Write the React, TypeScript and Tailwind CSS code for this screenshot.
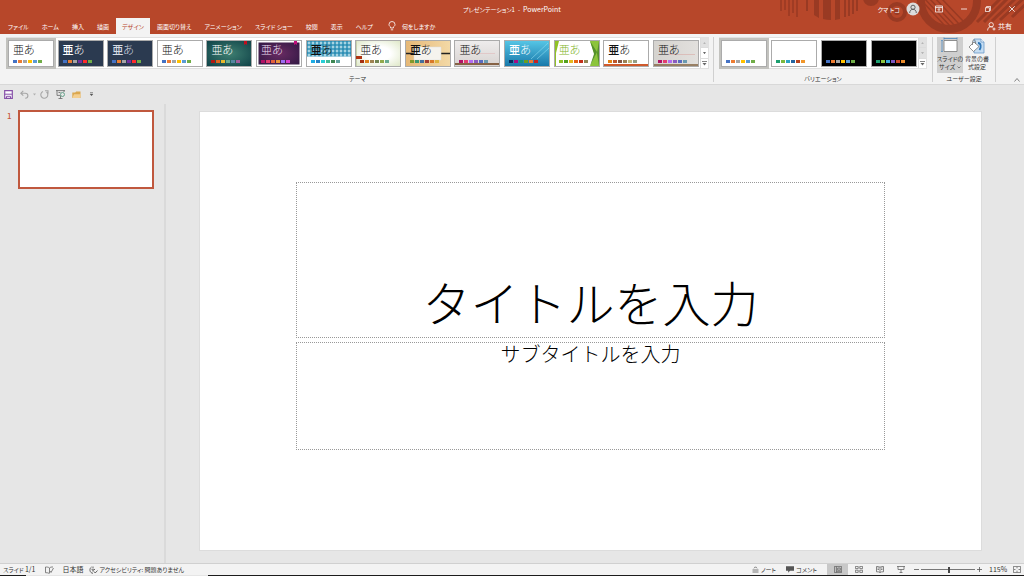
import { useState, type ReactNode } from "react";
import clsx from "clsx";

interface Theme {
  name: string;
  bg: string;
  ink?: string;
  bold?: boolean;
  colors: string[];
  art?: ReactNode;
}

const office = ["#4472c4", "#ed7d31", "#a5a5a5", "#ffc000", "#5b9bd5", "#70ad47"];
const night = ["#4472c4", "#ed7d31", "#a5a5a5", "#7030a0", "#ff2a2a", "#70ad47"];
const rose = ["#b31166", "#e33d6f", "#b36bf0", "#8a5bc0", "#5a6bc0", "#6a9ab0"];

const themes: Theme[] = [
  { name: "Office テーマ", bg: "bg-white", colors: office },
  { name: "ネイビー", bg: "bg-[#2b3a50]", ink: "text-white", bold: true, colors: night },
  { name: "スレート", bg: "bg-[#2b3a50]", ink: "text-[#d5dbe3]", bold: true, colors: night },
  { name: "ホワイト", bg: "bg-white", colors: office },
  {
    name: "イオン",
    bg: "bg-radial from-[#3f8072] to-[#0f4348]",
    ink: "text-white",
    colors: ["#b31912", "#e0661f", "#e8b82a", "#6aac90", "#5486a0", "#9e5e9b"],
    art: <path d="M37 0h3v4l-1.500-1-1.500 1z" fill="#c00d1e" />,
  },
  {
    name: "イオン ボードルーム",
    bg: "bg-radial from-[#6a2b63] to-[#2c1640]",
    ink: "text-[#e9dff0]",
    colors: ["#b31166", "#e33d6f", "#e45f3c", "#e9943a", "#9b6bf2", "#d53dd0"],
    art: (
      <>
        <path d="M.75.75h42.500v23.500H.75z" fill="none" stroke="#fff" strokeWidth="1.500" />
        <path d="M37 0h3v4l-1.500-1-1.500 1z" fill="#c00d7a" />
      </>
    ),
  },
  {
    name: "インテグラル",
    bg: "bg-white",
    bold: true,
    colors: ["#1cade4", "#2683c6", "#27ced7", "#42ba97", "#3e8853", "#62a39f"],
    art: (
      <>
        <defs>
          <pattern id="check" width="4" height="4" patternUnits="userSpaceOnUse">
            <path d="M0 0h4v4H0z" fill="#2e8fb5" />
            <path d="m2 .3 1.700 1.700L2 3.700.3 2z" fill="#a9d6e4" />
          </pattern>
        </defs>
        <path d="M0 0h44v15.500H0z" fill="url(#check)" />
      </>
    ),
  },
  {
    name: "ウィスプ",
    bg: "bg-radial from-white from-40% to-[#dfe8c8]",
    colors: ["#a53010", "#de7e18", "#9f8351", "#728653", "#92aa4c", "#6aac91"],
    art: (
      <>
        <path d="M.5 0v25" stroke="#c9d3ad" />
        <path d="M0 15h6v3H0z" fill="#b03513" />
      </>
    ),
  },
  {
    name: "オーガニック",
    bg: "bg-linear-to-r from-[#e6b877] to-[#f3d9a6]",
    bold: true,
    colors: ["#83992a", "#3c9770", "#44709d", "#a23c33", "#d97828", "#deb340"],
    art: (
      <>
        <path d="M0 12.500h44" stroke="#222" strokeWidth="1.500" />
        <path d="M8 6h27v13H8z" fill="#f5f3ee" stroke="#ddd" strokeWidth=".5" />
      </>
    ),
  },
  {
    name: "ギャラリー",
    bg: "bg-linear-to-b from-[#eeecec] to-[#d8d3d1]",
    colors: rose,
    art: (
      <>
        <path d="M14 12.500h26" stroke="#dfb9b9" strokeWidth=".6" />
        <path d="M0 23h44" stroke="#856245" strokeWidth="2" />
      </>
    ),
  },
  {
    name: "スライス",
    bg: "bg-linear-to-b from-[#55c5e5] to-[#1879aa]",
    ink: "text-white",
    bold: true,
    colors: ["#052f61", "#a50e82", "#14967c", "#6a9e1f", "#e87d37", "#c62324"],
    art: <path d="m26 18 17-16M32 18 44 7" stroke="#8fdcf0" strokeWidth=".6" />,
  },
  {
    name: "ファセット",
    bg: "bg-white",
    ink: "text-[#83b52a]",
    colors: ["#90c226", "#54a021", "#e6b91e", "#e76618", "#c42f1a", "#918655"],
    art: (
      <>
        <path d="M0 0h4L1 12v13H0z" fill="#90c226" />
        <path d="M35 0h9v25h-9l5-11z" fill="#8cc43c" />
        <path d="m35 0 7 11-7 14 4-12zM42 12l2-12v25z" fill="#55912b" />
      </>
    ),
  },
  {
    name: "レトロスペクト",
    bg: "bg-white",
    bold: true,
    colors: ["#e48312", "#bd582c", "#865640", "#9b8357", "#c2bc80", "#94a088"],
    art: <path d="M0 24h44" stroke="#cf5a2c" strokeWidth="2" />,
  },
  {
    name: "木版活字",
    bg: "bg-linear-to-r from-[#d5d3cf] to-[#e2e0dd]",
    colors: rose,
    art: (
      <>
        <path d="M14 13.500h27" stroke="#d8a9a4" strokeWidth=".6" />
        <path d="M0 24h44" stroke="#80613c" strokeWidth="1.500" />
      </>
    ),
  },
];

const variants: Theme[] = [
  { name: "バリエーション 1", bg: "bg-white", colors: office },
  {
    name: "バリエーション 2",
    bg: "bg-white",
    colors: ["#1b9e6f", "#7cb83e", "#2ba3c4", "#2465a0", "#b8431e", "#f0962a"],
  },
  { name: "バリエーション 3", bg: "bg-black", colors: office },
  {
    name: "バリエーション 4",
    bg: "bg-black",
    colors: ["#1b9e6f", "#8cc43e", "#3ba8d8", "#7a55c0", "#c8452a", "#e88a2a"],
  },
];

const tabs = [
  "ファイル",
  "ホーム",
  "挿入",
  "描画",
  "デザイン",
  "画面切り替え",
  "アニメーション",
  "スライド ショー",
  "校閲",
  "表示",
  "ヘルプ",
];

function Thumb({
  theme,
  selected,
  sample,
  onSelect,
}: {
  theme: Theme;
  selected: boolean;
  sample?: boolean;
  onSelect: () => void;
}) {
  return (
    <button
      type="button"
      aria-label={theme.name}
      aria-pressed={selected}
      onClick={onSelect}
      className={clsx(
        "relative h-[27px] w-[46px] shrink-0 overflow-hidden border border-[#ababab]",
        theme.bg,
        selected && "outline-2 outline-[#c2c2be]",
      )}
    >
      <svg viewBox="0 0 44 25" className="absolute inset-0 size-full">
        {theme.art}
      </svg>
      <span className="relative flex h-full flex-col justify-between px-1 pt-[3px] pb-[3px]">
        <span
          className={clsx(
            "flex h-3 items-center text-[11px] font-light",
            theme.ink ?? "text-[#111]",
          )}
        >
          {sample && (
            <>
              <span className={clsx(theme.bold && "font-medium")}>亜</span>
              <span>あ</span>
            </>
          )}
        </span>
        <span className="flex gap-px">
          {theme.colors.map((c) => (
            <span key={c} className="h-[3px] w-1" style={{ background: c }} />
          ))}
        </span>
      </span>
    </button>
  );
}

function Scroller({ label, atEnd }: { label: string; atEnd?: boolean }) {
  return (
    <div className="flex w-2 shrink-0 flex-col border-l border-[#dcdcdc]">
      <button
        type="button"
        disabled
        aria-label={`${label} 前へ`}
        className="flex flex-1 items-center justify-center bg-[#e1e1e1]"
      >
        <svg viewBox="0 0 4 3" className="w-[3px]">
          <path d="M0 3h4L2 0z" fill="#b5b5b5" />
        </svg>
      </button>
      <button
        type="button"
        disabled={atEnd}
        aria-label={`${label} 次へ`}
        className={clsx(
          "flex flex-1 items-center justify-center border-y border-[#dcdcdc]",
          atEnd && "bg-[#e1e1e1]",
        )}
      >
        <svg viewBox="0 0 4 3" className="w-[3px]">
          <path d="M0 0h4L2 3z" fill={atEnd ? "#b5b5b5" : "#666"} />
        </svg>
      </button>
      <button
        type="button"
        aria-label={`${label} 一覧`}
        className="flex flex-1 items-center justify-center"
      >
        <svg viewBox="0 0 5 5" className="w-[5px]">
          <path d="M0 .5h5" stroke="#666" strokeWidth=".8" />
          <path d="M.5 2h4l-2 2.500z" fill="#666" />
        </svg>
      </button>
    </div>
  );
}

function TitleArt() {
  return (
    <svg
      viewBox="0 0 244 34"
      className="pointer-events-none absolute top-0 right-0 h-[34px] w-[244px]"
      fill="none"
      stroke="#993a23"
    >
      <path d="M1 0v11M5 0v10M9 0v16M13 0v13M17 0v17" strokeWidth="1.500" />
      <path d="M27 0v11M65 0v17M69 0v16M73 0v14M77 0v11" strokeWidth="2" />
      <path d="M34 0h5v18l-5-3zM43 0h8v20q-4 0-8-1zM55 0h5v19l-5 1z" fill="#993a23" stroke="none" />
      <circle cx="91" cy="-2" r="8" fill="#993a23" stroke="none" />
      <circle cx="117" cy="12" r="8" strokeWidth="4" />
      <circle cx="117" cy="12" r="3" fill="#993a23" stroke="none" />
      <circle cx="169" cy="1" r="28" strokeWidth="8" />
      <path
        d="m143 2 22 24M144-2l27 29M149-2l26 28M155-2l24 26M161-2l22 23"
        strokeWidth="1.500"
      />
      <path d="m197 22 24-24M204 22l24-24M212 21l24-23M220 20l24-22M232 17l16-15" strokeWidth="3" />
    </svg>
  );
}

function TitleBar() {
  return (
    <div className="relative grid h-[18px] grid-cols-[1fr_auto_1fr] items-center text-[7px]">
      <h1 className="col-start-2">
        <span className="text-[6px]">プレゼンテーション1&ensp;-&ensp;</span>
        PowerPoint
      </h1>
      <div className="flex items-center justify-end pr-1">
        <span className="text-[6px]">クマ トコ</span>
        <button type="button" aria-label="アカウント" className="mr-[15px] ml-1.5">
          <svg viewBox="0 0 14 14" className="size-3.5">
            <circle cx="7" cy="7" r="6.500" fill="#dcdcdc" />
            <g fill="none" stroke="#555" strokeWidth=".9">
              <circle cx="7" cy="5.300" r="2.100" />
              <path d="M3.700 11c0-5 6.600-5 6.600 0" />
            </g>
          </svg>
        </button>
        <button type="button" aria-label="リボンの表示オプション" className="mr-[18px]">
          <svg viewBox="0 0 8 8" className="size-2" fill="none" stroke="#fff" strokeWidth=".8">
            <path d="M.4 1h7.200v6H.4zM.4 2.600h7.200M4 6.300V3.600M2.800 4.800 4 3.600l1.200 1.200" />
          </svg>
        </button>
        <button type="button" aria-label="最小化" className="mr-[18px]">
          <svg viewBox="0 0 6 6" className="size-1.5" stroke="#fff" strokeWidth=".8">
            <path d="M0 3h6" />
          </svg>
        </button>
        <button type="button" aria-label="元に戻す (縮小)" className="mr-[18px]">
          <svg viewBox="0 0 6 6" className="size-1.5" fill="none" stroke="#fff" strokeWidth=".8">
            <path d="M.4 1.700h4v3.900h-4zM1.600 1.700V.4h4v4H4.400" />
          </svg>
        </button>
        <button type="button" aria-label="閉じる" className="pr-[5px]">
          <svg viewBox="0 0 6 6" className="size-1.5" stroke="#fff" strokeWidth=".8">
            <path d="m.3.3 5.400 5.400M5.700.3.3 5.700" />
          </svg>
        </button>
      </div>
    </div>
  );
}

function Tabs() {
  const [active, setActive] = useState("デザイン");
  return (
    <nav className="relative flex h-4 items-stretch gap-px pl-0.5 text-[6px]">
      {tabs.map((t) => (
        <button
          key={t}
          type="button"
          onClick={() => setActive(t)}
          className={clsx("px-1.5", t === active && "bg-[#f3f3f3] text-[#b7472a]")}
        >
          {t}
        </button>
      ))}
      <button type="button" className="ml-2 flex items-center gap-1.5">
        <svg viewBox="0 0 8 10" className="h-2.5 w-2" fill="none" stroke="#fff" strokeWidth=".8">
          <path d="M2.600 7V6C1.500 5.200 1 4.500 1 3.500a3 3 0 0 1 6 0c0 1-.5 1.700-1.600 2.500v1zM2.800 8.800h2.400" />
        </svg>
        何をしますか
      </button>
      <button type="button" className="ml-auto flex items-center gap-0.5 pr-3 text-[7px]">
        <svg viewBox="0 0 9 9" className="size-[9px]" fill="none" stroke="#fff" strokeWidth=".8">
          <circle cx="4.200" cy="2.800" r="2.200" />
          <path d="M.6 8.500C.8 4 5 4 6 5.500M7 5.500v3M5.500 7h3" />
        </svg>
        共有
      </button>
    </nav>
  );
}

function Ribbon() {
  const [theme, setTheme] = useState(0);
  const [variant, setVariant] = useState(0);
  return (
    <section className="flex h-[51px] border-b border-[#d8d8d8] bg-[#f3f3f3] pt-[3px] pl-1.5 text-[6px] text-[#333]">
      <div className="flex min-w-0 flex-1 flex-col">
        <div className="flex h-8 border border-[#e0e0e0] bg-white">
          <div className="flex min-w-0 flex-1 items-center justify-between px-px">
            {themes.map((t, i) => (
              <Thumb
                key={t.name}
                theme={t}
                sample
                selected={i === theme}
                onSelect={() => setTheme(i)}
              />
            ))}
          </div>
          <Scroller label="テーマ" />
        </div>
        <h2 className="flex flex-1 items-center justify-center pt-1">テーマ</h2>
      </div>
      <div className="mr-[5px] ml-1 mb-0.5 w-px bg-[#d0d0d0]" />
      <div className="flex w-[208px] flex-col">
        <div className="flex h-8 border border-[#e0e0e0] bg-white">
          <div className="flex flex-1 items-center justify-between px-px">
            {variants.map((t, i) => (
              <Thumb
                key={t.name}
                theme={t}
                selected={i === variant}
                onSelect={() => setVariant(i)}
              />
            ))}
          </div>
          <Scroller label="バリエーション" atEnd />
        </div>
        <h2 className="flex flex-1 items-center justify-center pt-1">バリエーション</h2>
      </div>
      <div className="mr-1 ml-[5px] mb-0.5 w-px bg-[#d0d0d0]" />
      <div className="flex w-[54px] flex-col">
        <div className="flex h-9 leading-2">
          <button type="button" className="flex w-[26px] flex-col items-center bg-[#cfcfcf]">
            <svg viewBox="0 0 18 18" className="size-[18px]">
              <path d="M3 3.500h13v11H3z" fill="#fff" stroke="#777" strokeWidth=".8" />
              <path
                d="M3 1.500h13M3 .5v2M16 .5v2M1 3.500v11M.2 3.500h1.600M.2 14.500h1.600"
                stroke="#4a86bd"
                strokeWidth=".8"
              />
            </svg>
            <span className="whitespace-nowrap">
              スライドの
              <br />
              サイズ
              <svg viewBox="0 0 4 3" className="ml-0.5 inline h-[3px] w-1">
                <path d="m.5.5 1.500 1.500L3.500.5" fill="none" stroke="#666" strokeWidth=".8" />
              </svg>
            </span>
          </button>
          <button type="button" className="flex w-7 flex-col items-center">
            <svg viewBox="0 0 18 18" className="size-[18px]">
              <path d="M6 2h7l3 3v11H6z" fill="#c5ddf2" stroke="#6b9bc8" strokeWidth=".8" />
              <path d="M13 2v3h3" fill="#fff" stroke="#6b9bc8" strokeWidth=".8" />
              <path d="M10 6c3 0 3.500 4 1.500 7" fill="none" stroke="#2e75b6" strokeWidth="1.800" />
              <path d="m1 10 5-5 5 4.500-5.500 5z" fill="#fff" stroke="#777" strokeWidth=".8" />
              <path d="M4.500 8V4.500c0-2 3-2 3 0V7" fill="none" stroke="#777" strokeWidth=".8" />
            </svg>
            <span className="whitespace-nowrap">
              背景の書
              <br />
              式設定
            </span>
          </button>
        </div>
        <h2 className="flex flex-1 items-center justify-center">ユーザー設定</h2>
      </div>
      <div className="mr-[18px] mb-0.5 ml-1 w-px bg-[#d0d0d0]" />
      <button type="button" aria-label="リボンを折りたたむ" className="self-end pr-1 pb-0.5">
        <svg viewBox="0 0 6 4" className="h-1 w-1.5" fill="none" stroke="#666" strokeWidth=".8">
          <path d="m.5 3.500 2.500-3 2.500 3" />
        </svg>
      </button>
    </section>
  );
}

function QuickAccess() {
  return (
    <div className="flex h-[19px] items-center pl-1">
      <button type="button" aria-label="上書き保存" className="mr-[7px]">
        <svg viewBox="0 0 9 9" className="size-[9px]">
          <path d="M.7.7h7.600v7.600H.7z" fill="#fff" stroke="#8650a8" strokeWidth="1.200" />
          <path d="M.7 4.200h7.600M2.500 8.300v-2h4v2" fill="none" stroke="#8650a8" />
        </svg>
      </button>
      <button type="button" aria-label="元に戻す" className="mr-1">
        <svg viewBox="0 0 9 9" className="size-[9px]" fill="none" stroke="#a6a6a6" strokeWidth="1.100">
          <path d="M3.300.8.8 3.200l2.500 2.400M1 3.200h4.200c3.600 0 3.600 5 0 5" />
        </svg>
      </button>
      <button type="button" aria-label="元に戻す履歴" className="mr-1">
        <svg viewBox="0 0 3 3" className="size-[3px]">
          <path d="M0 .5h3L1.500 2.500z" fill="#b0b0b0" />
        </svg>
      </button>
      <button type="button" aria-label="繰り返し" className="mr-[7px]">
        <svg viewBox="0 0 9 9" className="size-[9px]" fill="none" stroke="#a6a6a6" strokeWidth="1.100">
          <path d="M3 1.500A3.500 3.500 0 1 0 6.500 2M5 .8h3v3" />
        </svg>
      </button>
      <button type="button" aria-label="最初から開始" className="mr-[7px]">
        <svg viewBox="0 0 9 9" className="size-[9px]" fill="none" stroke="#666" strokeWidth=".8">
          <path d="M0 .6h9M1 .6v4.800h3M8 .6v1.500M4.500 5.500v3M2.500 8.500h4M2.500 2.500h2" />
          <circle cx="6.500" cy="4.500" r="2" stroke="#4e9478" />
        </svg>
      </button>
      <button type="button" aria-label="開く" className="mr-2">
        <svg viewBox="0 0 9 9" className="size-[9px]">
          <path d="M.3 8V2.500h3l.8-1h4.400V8z" fill="#dba850" />
          <path d="M.3 8 2 4.300h7L7.800 8z" fill="#f4cf90" />
        </svg>
      </button>
      <button type="button" aria-label="クイック アクセス ツール バーのユーザー設定">
        <svg viewBox="0 0 5 5" className="size-[5px]">
          <path d="M1 .8h3" stroke="#555" strokeWidth=".7" />
          <path d="M.8 2h3.400L2.500 4z" fill="#555" />
        </svg>
      </button>
    </div>
  );
}

function Slide() {
  const box = "flex border border-dotted border-[#999]";
  const field =
    "w-full bg-transparent text-center text-black outline-none placeholder:text-black placeholder:opacity-100";
  return (
    <div className="flex aspect-video flex-col gap-1 border border-[#dcdcdc] bg-white px-24 pt-[9%]">
      <div className={clsx(box, "h-[156px] items-end pb-1")}>
        <input
          aria-label="タイトル"
          placeholder="タイトルを入力"
          className={clsx(field, "h-16 text-5xl font-light")}
        />
      </div>
      <div className={clsx(box, "h-[108px] items-start")}>
        <input
          aria-label="サブタイトル"
          placeholder="サブタイトルを入力"
          className={clsx(field, "h-[22px] text-xl font-light")}
        />
      </div>
    </div>
  );
}

function StatusBar() {
  const [zoom, setZoom] = useState(115);
  return (
    <footer className="text-[6px] text-[#333]">
      <div className="flex h-3 items-center border-t border-[#d0d0d0] bg-[#f3f3f3] pl-[3px]">
        <span className="mr-2.5">
          スライド <span className="text-[7px]">1/1</span>
        </span>
        <button type="button" aria-label="スペル チェック" className="mr-2">
          <svg viewBox="0 0 9 8" className="h-2 w-[9px]" fill="none" stroke="#666" strokeWidth=".8">
            <path d="M4.500 7.500C3.500 6.800 2 6.700.5 6.700V1c1.500 0 3 0 4 1 1-1 2-1 3.500-1M4.500 2v5M5 5l1 1.500L8.500 2" />
          </svg>
        </button>
        <button type="button" className="mr-1.5 text-[7px]">
          日本語
        </button>
        <button type="button" className="flex items-center gap-px">
          <svg viewBox="0 0 9 8" className="h-2 w-[9px]" fill="none" stroke="#555" strokeWidth=".9">
            <path d="M2.500 1C0 2.500.5 7 4 7.300M4 .5v2M2.500 3.300 4 4l2-.7M4 4v1.500M5 5.500l1.200 1.500L8.500 4.500" />
          </svg>
          アクセシビリティ: 問題ありません
        </button>
        <button type="button" className="ml-auto mr-2.5 flex items-center gap-0.5">
          <svg viewBox="0 0 7 7" className="size-[7px]" fill="none" stroke="#555" strokeWidth=".8">
            <path d="M2 2.300 3.500.8 5 2.300M.5 4h6M.5 6h6" />
          </svg>
          ノート
        </button>
        <button type="button" className="mr-2.5 flex items-center gap-0.5">
          <svg viewBox="0 0 8 7" className="h-[7px] w-2">
            <path d="M0 .3h8v4.500H4L2.200 6.800v-2H0z" fill="#555" />
          </svg>
          コメント
        </button>
        <div className="mr-[3px] flex h-full items-center">
          <button
            type="button"
            aria-label="標準"
            className="flex h-full w-[21px] items-center justify-center bg-[#c8c8c8]"
          >
            <svg viewBox="0 0 8 7" className="h-[7px] w-2" fill="none" stroke="#666" strokeWidth=".8">
              <path d="M.4.4h7.200v6.200H.4zM2.400.4v6.200M3.700 2h2.600v2.200H3.700zM2.400 5.300h5" />
            </svg>
          </button>
          <button
            type="button"
            aria-label="スライド一覧"
            className="flex h-full w-[21px] items-center justify-center"
          >
            <svg viewBox="0 0 8 7" className="h-[7px] w-2" fill="none" stroke="#666" strokeWidth=".8">
              <path d="M.4.4h2.800v2.200H.4zM4.800.4h2.800v2.200H4.800zM.4 4.200h2.800v2.200H.4zM4.800 4.200h2.800v2.200H4.800z" />
            </svg>
          </button>
          <button
            type="button"
            aria-label="閲覧表示"
            className="flex h-full w-[21px] items-center justify-center"
          >
            <svg viewBox="0 0 8 7" className="h-[7px] w-2" fill="none" stroke="#666" strokeWidth=".8">
              <path d="M4 1.200C3 .5 2 .5.500.5v5.300C2 5.800 3 5.800 4 6.500c1-.7 2-.7 3.500-.7V.5C6 .5 5 .5 4 1.200zM4 1.200v5.300M1.500 2h1.500M1.500 3.500h1.500M5 2h1.500M5 3.500h1.500" />
            </svg>
          </button>
          <button
            type="button"
            aria-label="スライド ショー"
            className="flex h-full w-[21px] items-center justify-center"
          >
            <svg viewBox="0 0 8 7" className="h-[7px] w-2" fill="none" stroke="#666" strokeWidth=".8">
              <path d="M0 .5h8M1 .5v3h6v-3M4 3.500v3M2.500 6.500h3" />
            </svg>
          </button>
        </div>
        <button
          type="button"
          aria-label="縮小"
          className="mr-0.5"
          onClick={() => setZoom((z) => Math.max(10, z - 10))}
        >
          <svg viewBox="0 0 5 5" className="size-[5px]" stroke="#555" strokeWidth=".8">
            <path d="M0 2.500h5" />
          </svg>
        </button>
        <input
          type="range"
          aria-label="ズーム"
          min={10}
          max={210}
          value={zoom}
          onChange={(e) => setZoom(Number(e.target.value))}
          className="h-[7px] w-[54px] appearance-none bg-[linear-gradient(#777,#777)] bg-[length:100%_1px] bg-center bg-no-repeat [&::-webkit-slider-thumb]:h-1.5 [&::-webkit-slider-thumb]:w-0.5 [&::-webkit-slider-thumb]:appearance-none [&::-webkit-slider-thumb]:bg-[#444]"
        />
        <button
          type="button"
          aria-label="拡大"
          className="ml-0.5 mr-[7px]"
          onClick={() => setZoom((z) => Math.min(210, z + 10))}
        >
          <svg viewBox="0 0 5 5" className="size-[5px]" stroke="#555" strokeWidth=".8">
            <path d="M0 2.500h5M2.500 0v5" />
          </svg>
        </button>
        <button type="button" className="w-6 text-left text-[7px]">
          {zoom}%
        </button>
        <button type="button" aria-label="ウィンドウの大きさに合わせる" className="pr-[3px]">
          <svg viewBox="0 0 8 7" className="h-[7px] w-2" fill="none" stroke="#666" strokeWidth=".8">
            <path d="M.4.4h7.200v6.200H.4zM4 .8v1.500M4 4.700v1.500M1 3.500h1.500M5.500 3.500H7" />
          </svg>
        </button>
      </div>
      <div className="flex h-px bg-[#1c1c1c]">
        <div className="ml-[26px] w-[182px] bg-[#e5e5e5]" />
      </div>
    </footer>
  );
}

export default function App() {
  return (
    <div className="flex min-h-screen flex-col bg-[#e6e6e6] font-['Noto_Sans_CJK_JP',sans-serif]">
      <div className="flex flex-col [font-feature-settings:'palt']">
        <header className="relative bg-[#b7472a] text-white">
          <TitleArt />
          <TitleBar />
          <Tabs />
        </header>
        <Ribbon />
        <QuickAccess />
      </div>
      <main className="flex flex-1">
        <aside className="flex w-[166px] items-start border-r-2 border-[#dadada] pt-1.5 pr-2.5">
          <span className="w-[18px] pl-[7px] text-[8px] leading-3 font-medium text-[#c8583c]">
            1
          </span>
          <button
            type="button"
            aria-label="スライド 1"
            className="aspect-[136/79] flex-1 border-2 border-[#c0583e] bg-white"
          />
        </aside>
        <div className="flex-1 pt-[7px] pr-[42px] pl-[33px]">
          <Slide />
        </div>
      </main>
      <div className="[font-feature-settings:'palt']">
        <StatusBar />
      </div>
    </div>
  );
}
